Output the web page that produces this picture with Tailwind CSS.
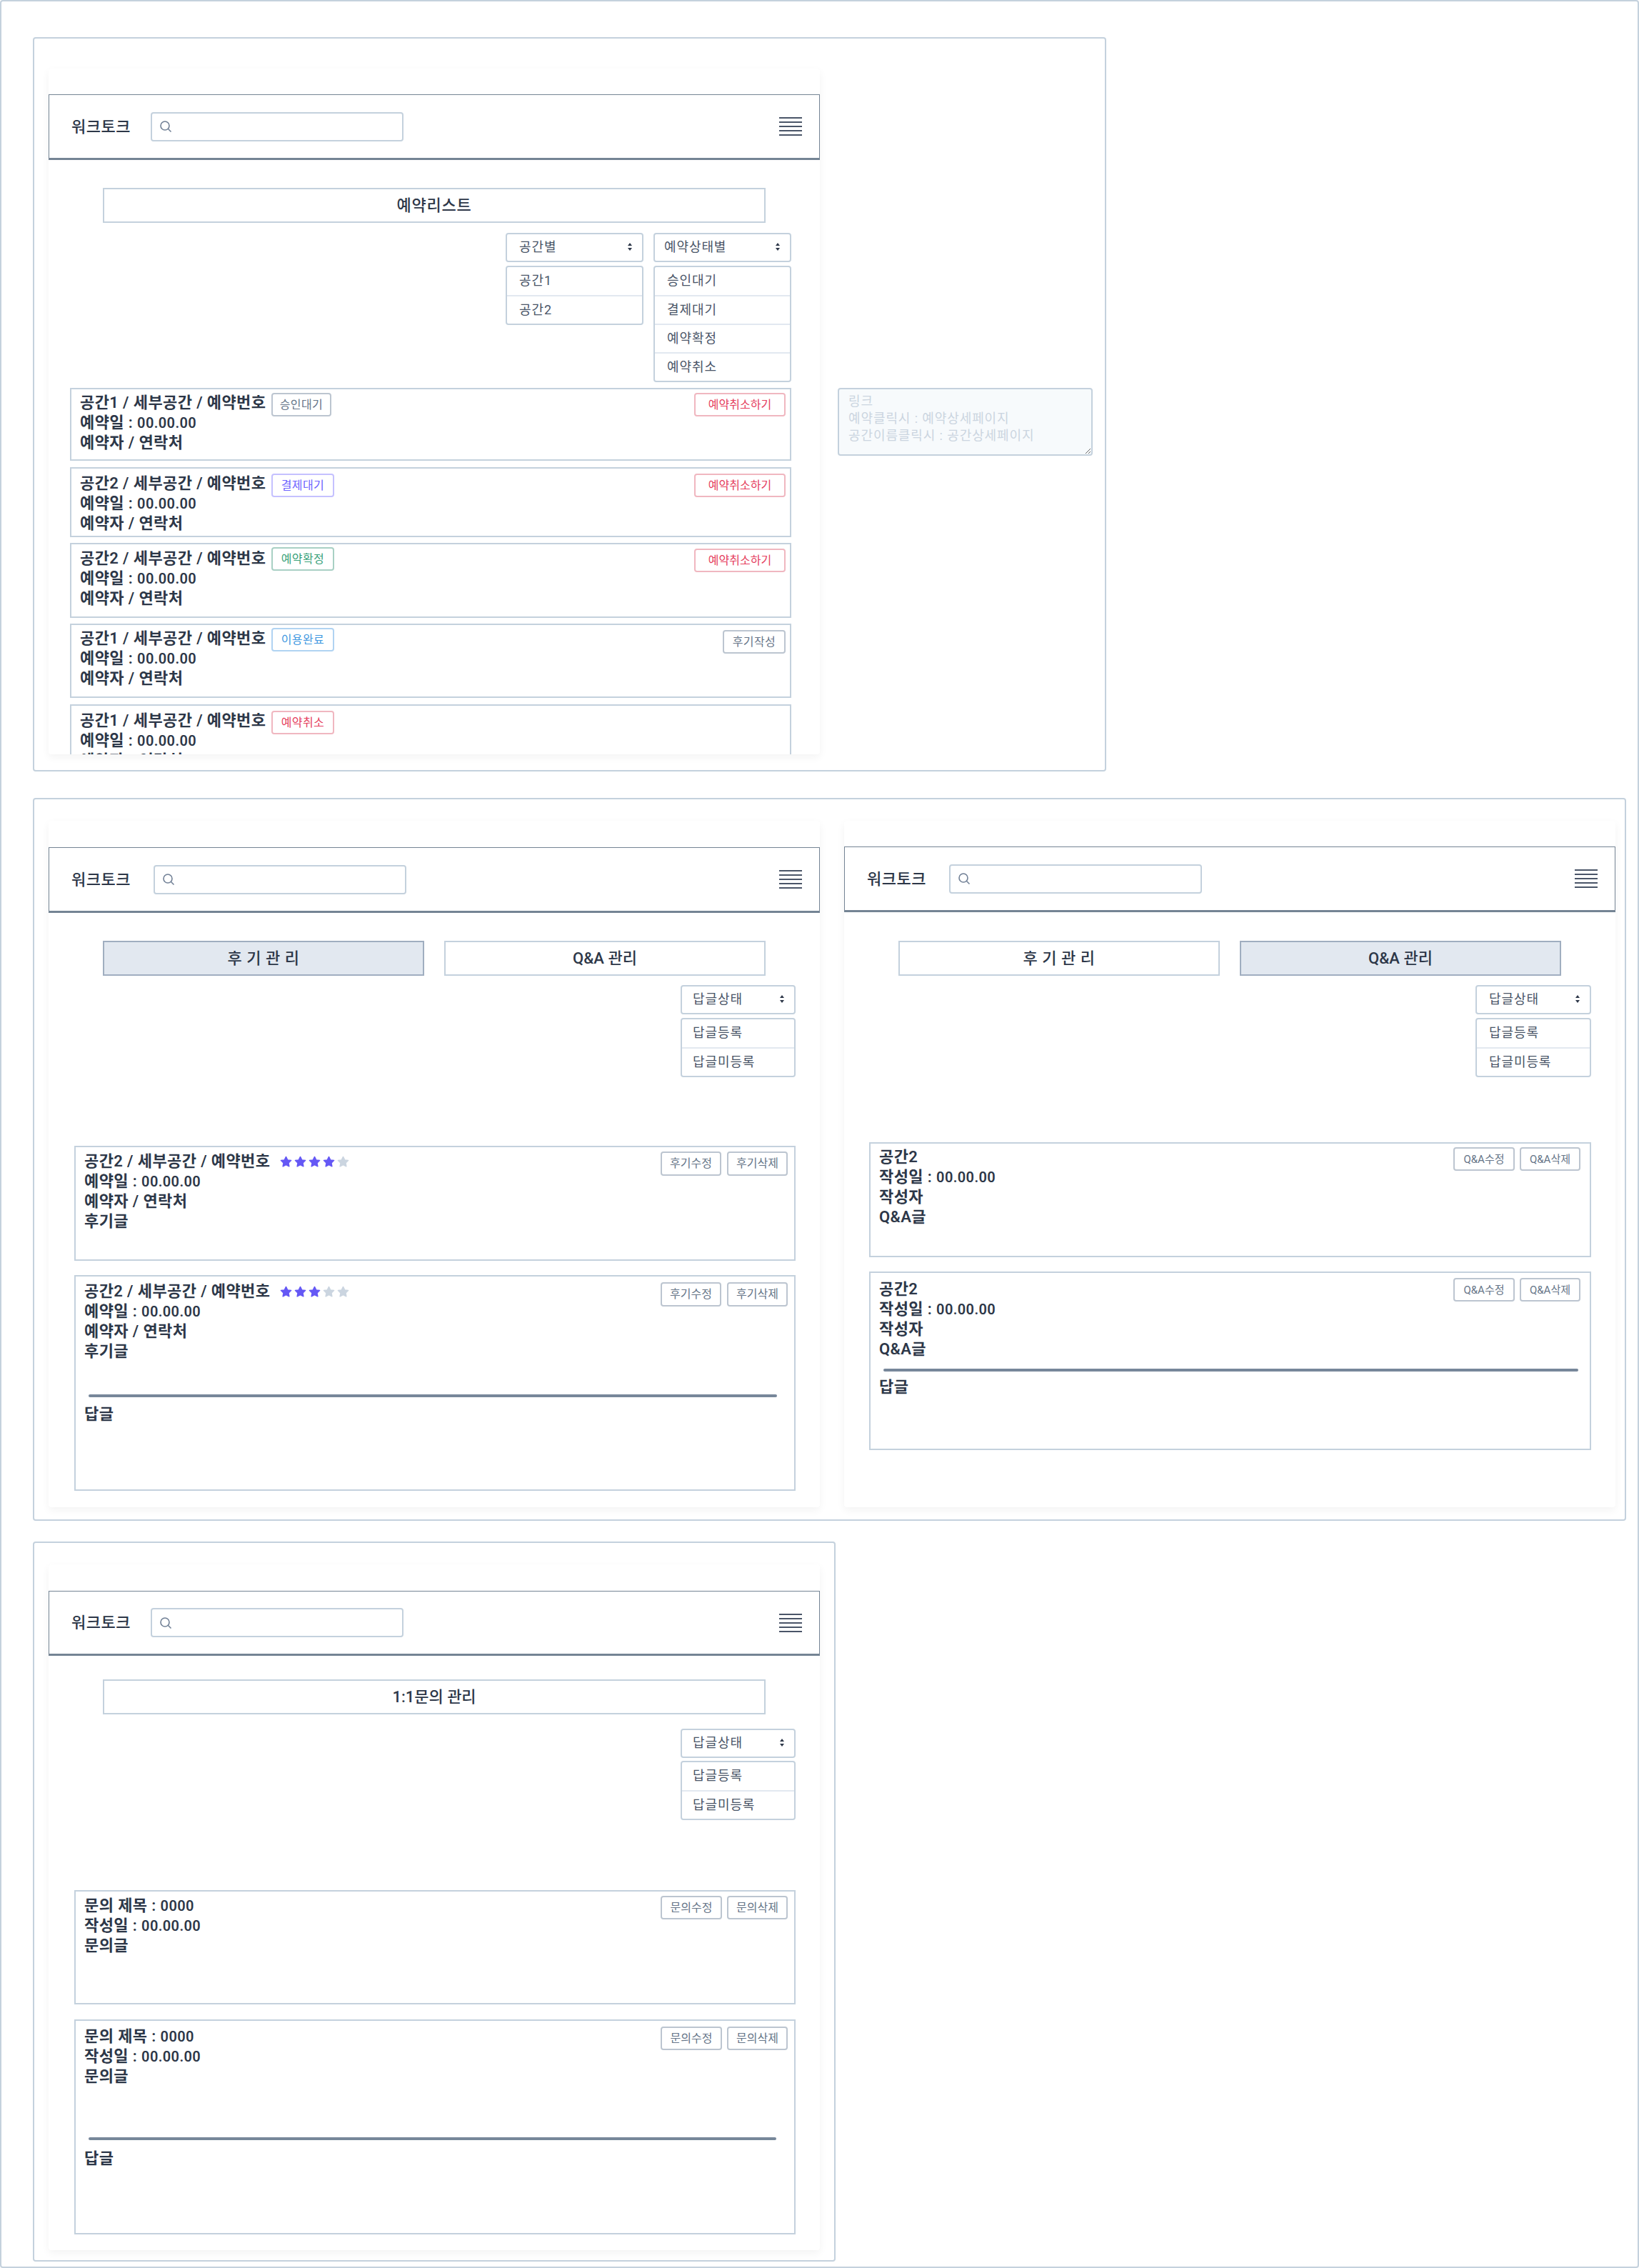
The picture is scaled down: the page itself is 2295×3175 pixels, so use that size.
<!DOCTYPE html>
<html lang="ko">
<head>
  <meta charset="UTF-8">
  <title>워크토크</title>
  <script src="https://cdn.jsdelivr.net/npm/@tailwindcss/browser@4"></script>
</head>
<body class="bg-white">
<div class="w-[2295px] h-[3175px] border-2 border-[#c4d1dd] rounded-sm pl-[44px] pt-[50px] overflow-hidden font-['Roboto','Noto_Sans_CJK_KR',sans-serif] text-[#2d3748]">

  <!-- 예약리스트 -->
  <section class="w-[1503px] h-[1028px] border-2 border-[#c4d1dd] rounded-sm pl-[20px] pt-[42px] flex">
    <div class="w-[1080px] h-[960px] bg-white rounded-sm shadow-[0_4px_12px_rgba(0,0,0,0.05)] overflow-hidden pt-[36px]">
      <header class="h-[92px] border border-b-[3px] border-[#748494] flex items-center pl-[31px] pr-[24px]">
        <span class="w-[111px] text-[22px] font-medium tracking-[0.5px]">워크토크</span>
        <div class="w-[354px] h-[41px] border-2 border-[#c4d1dd] rounded flex items-center pl-[10px]">
          <svg class="w-[18px] h-[18px]" viewBox="0 0 18 18" fill="none" stroke="#718096" stroke-width="1.6"><circle cx="8" cy="8" r="6"/><path d="M12.5 12.5L16.5 16.5"/></svg>
        </div>
        <div class="ml-auto w-[32px] flex flex-col gap-[4px]">
          <i class="block h-[2px] bg-[#4a5568]"></i><i class="block h-[2px] bg-[#4a5568]"></i><i class="block h-[2px] bg-[#4a5568]"></i><i class="block h-[2px] bg-[#4a5568]"></i><i class="block h-[2px] bg-[#4a5568]"></i>
        </div>
      </header>
      <h2 class="ml-[76px] mt-[39px] w-[928px] h-[49px] border-2 border-[#c4d1dd] flex items-center justify-center text-[22px] font-medium tracking-[0.8px]">예약리스트</h2>
      <div class="mt-[14px] pr-[40px] h-[217px] flex justify-end items-start gap-[14px] text-[18px] text-[#4a5568] tracking-[0.9px]">
        <div class="w-[193px]">
          <div class="h-[41px] border-2 border-[#c4d1dd] rounded flex items-center justify-between pl-[17px] pr-[14px] pb-[2px]">공간별
            <svg class="w-[6px] h-[11px]" viewBox="0 0 6 11" fill="#2d3748"><path d="M3 0L6 4H0zM3 11L0 7H6z"/></svg>
          </div>
          <ul class="mt-[5px] border-2 border-[#c4d1dd] rounded">
            <li class="h-[39px] pl-[17px] pb-[2px] flex items-center">공간1</li>
            <li class="h-[40px] pl-[17px] pb-[2px] flex items-center border-t-2 border-[#e2e8f0]">공간2</li>
          </ul>
        </div>
        <div class="w-[193px]">
          <div class="h-[41px] border-2 border-[#c4d1dd] rounded flex items-center justify-between pl-[13px] pr-[14px] pb-[2px]">예약상태별
            <svg class="w-[6px] h-[11px]" viewBox="0 0 6 11" fill="#2d3748"><path d="M3 0L6 4H0zM3 11L0 7H6z"/></svg>
          </div>
          <ul class="mt-[5px] border-2 border-[#c4d1dd] rounded">
            <li class="h-[39px] pl-[17px] pb-[2px] flex items-center">승인대기</li>
            <li class="h-[40px] pl-[17px] pb-[2px] flex items-center border-t-2 border-[#e2e8f0]">결제대기</li>
            <li class="h-[40px] pl-[17px] pb-[2px] flex items-center border-t-2 border-[#e2e8f0]">예약확정</li>
            <li class="h-[40px] pl-[17px] pb-[2px] flex items-center border-t-2 border-[#e2e8f0]">예약취소</li>
          </ul>
        </div>
      </div>
      <article class="ml-[30px] w-[1010px] h-[102px] border-2 border-[#c4d1dd] pl-[12px] pr-[6px] pt-[5px] flex justify-between items-start text-[22px] leading-[28px] font-semibold tracking-[0.4px]">
        <div>
          <p class="flex items-start h-[28px]"><span class="w-[268px]">공간1 / 세부공간 / 예약번호</span><span class="h-[33px] w-[84px] border-2 border-[#bcc5d0] rounded-sm flex items-center justify-center text-[16px] font-normal text-[#667588]">승인대기</span></p>
          <p>예약일 : <span class="text-[20px]">00.00.00</span></p>
          <p>예약자 / 연락처</p>
        </div>
        <button class="h-[33px] w-[128px] border-2 border-[#f0b7c0] rounded-sm text-[16px] font-normal tracking-normal text-[#e53e5e]">예약취소하기</button>
      </article>
      <article class="ml-[30px] mt-[9px] w-[1010px] h-[98px] border-2 border-[#c4d1dd] pl-[12px] pr-[6px] pt-[7px] flex justify-between items-start text-[22px] leading-[28px] font-semibold tracking-[0.4px]">
        <div>
          <p class="flex items-start h-[28px]"><span class="w-[268px]">공간2 / 세부공간 / 예약번호</span><span class="h-[33px] w-[88px] border-2 border-[#c5c1ff] rounded-sm flex items-center justify-center text-[16px] font-normal text-[#6c63ff]">결제대기</span></p>
          <p>예약일 : <span class="text-[20px]">00.00.00</span></p>
          <p>예약자 / 연락처</p>
        </div>
        <button class="h-[33px] w-[128px] border-2 border-[#f0b7c0] rounded-sm text-[16px] font-normal tracking-normal text-[#e53e5e]">예약취소하기</button>
      </article>
      <article class="ml-[30px] mt-[8px] w-[1010px] h-[105px] border-2 border-[#c4d1dd] pl-[12px] pr-[6px] pt-[6px] flex justify-between items-start text-[22px] leading-[28px] font-semibold tracking-[0.4px]">
        <div>
          <p class="flex items-start h-[28px]"><span class="w-[268px]">공간2 / 세부공간 / 예약번호</span><span class="-mt-[2px] h-[33px] w-[88px] border-2 border-[#a8d0c4] rounded-sm flex items-center justify-center text-[16px] font-normal text-[#38a17a]">예약확정</span></p>
          <p>예약일 : <span class="text-[20px]">00.00.00</span></p>
          <p>예약자 / 연락처</p>
        </div>
        <button class="h-[33px] w-[128px] border-2 border-[#f0b7c0] rounded-sm text-[16px] font-normal tracking-normal text-[#e53e5e]">예약취소하기</button>
      </article>
      <article class="ml-[30px] mt-[8px] w-[1010px] h-[104px] border-2 border-[#c4d1dd] pl-[12px] pr-[6px] pt-[5px] flex justify-between items-start text-[22px] leading-[28px] font-semibold tracking-[0.4px]">
        <div>
          <p class="flex items-start h-[28px]"><span class="w-[268px]">공간1 / 세부공간 / 예약번호</span><span class="-mt-[1px] h-[33px] w-[88px] border-2 border-[#b0d3f2] rounded-sm flex items-center justify-center text-[16px] font-normal text-[#4299e1]">이용완료</span></p>
          <p>예약일 : <span class="text-[20px]">00.00.00</span></p>
          <p>예약자 / 연락처</p>
        </div>
        <button class="mt-[2px] h-[33px] w-[88px] border-2 border-[#bcc5d0] rounded-sm text-[16px] font-normal text-[#667588]">후기작성</button>
      </article>
      <article class="ml-[30px] mt-[9px] w-[1010px] h-[104px] border-2 border-[#c4d1dd] pl-[12px] pr-[6px] pt-[7px] text-[22px] leading-[28px] font-semibold tracking-[0.4px]">
        <p class="flex items-start h-[28px]"><span class="w-[268px]">공간1 / 세부공간 / 예약번호</span><span class="h-[33px] w-[88px] border-2 border-[#f0b7c0] rounded-sm flex items-center justify-center text-[16px] font-normal text-[#e53e5e]">예약취소</span></p>
        <p>예약일 : <span class="text-[20px]">00.00.00</span></p>
        <p>예약자 / 연락처</p>
      </article>
    </div>
    <textarea class="ml-[25px] mt-[447px] w-[357px] h-[95px] border-2 border-[#c4d1dd] rounded bg-[#f7fafc] px-[13px] py-[5px] text-[18px] leading-[24px] tracking-[0.9px] placeholder:text-[#cbd5e0]" placeholder="링크&#10;예약클릭시 : 예약상세페이지&#10;공간이름클릭시 : 공간상세페이지"></textarea>
  </section>

  <!-- 후기 / Q&A 관리 -->
  <section class="mt-[37px] w-[2231px] h-[1012px] border-2 border-[#c4d1dd] rounded-sm pl-[20px] pt-[30px] flex gap-[34px]">
    <div class="w-[1080px] h-[961px] bg-white rounded-sm shadow-[0_4px_12px_rgba(0,0,0,0.05)] pt-[37px]">
      <header class="h-[92px] border border-b-[3px] border-[#748494] flex items-center pl-[31px] pr-[24px]">
        <span class="w-[115px] text-[22px] font-medium tracking-[0.5px]">워크토크</span>
        <div class="w-[354px] h-[41px] border-2 border-[#c4d1dd] rounded flex items-center pl-[10px]">
          <svg class="w-[18px] h-[18px]" viewBox="0 0 18 18" fill="none" stroke="#718096" stroke-width="1.6"><circle cx="8" cy="8" r="6"/><path d="M12.5 12.5L16.5 16.5"/></svg>
        </div>
        <div class="ml-auto w-[32px] flex flex-col gap-[4px]">
          <i class="block h-[2px] bg-[#4a5568]"></i><i class="block h-[2px] bg-[#4a5568]"></i><i class="block h-[2px] bg-[#4a5568]"></i><i class="block h-[2px] bg-[#4a5568]"></i><i class="block h-[2px] bg-[#4a5568]"></i>
        </div>
      </header>
      <div class="ml-[76px] mt-[39px] flex gap-[28px]">
        <div class="w-[450px] h-[49px] border-2 border-[#a0aec0] bg-[#e2e8f0] flex items-center justify-center text-[22px] font-medium tracking-[0.5px]">후 기 관 리</div>
        <div class="w-[450px] h-[49px] border-2 border-[#c4d1dd] flex items-center justify-center text-[22px] font-medium">Q&amp;A 관리</div>
      </div>
      <div class="mt-[13px] ml-[885px] w-[161px] h-[225px] text-[18px] text-[#4a5568] tracking-[0.9px]">
        <div class="h-[41px] border-2 border-[#c4d1dd] rounded flex items-center justify-between pl-[15px] pr-[14px] pb-[2px]">답글상태
          <svg class="w-[6px] h-[11px]" viewBox="0 0 6 11" fill="#2d3748"><path d="M3 0L6 4H0zM3 11L0 7H6z"/></svg>
        </div>
        <ul class="mt-[5px] border-2 border-[#c4d1dd] rounded">
          <li class="h-[39px] pl-[15px] pb-[2px] flex items-center">답글등록</li>
          <li class="h-[40px] pl-[15px] pb-[2px] flex items-center border-t-2 border-[#e2e8f0]">답글미등록</li>
        </ul>
      </div>
      <article class="ml-[36px] w-[1010px] h-[161px] border-2 border-[#c4d1dd] pl-[12px] pr-[9px] pt-[6px] flex justify-between items-start text-[22px] leading-[28px] font-semibold tracking-[0.4px]">
        <div>
          <p class="flex items-center h-[28px]"><span class="w-[274px]">공간2 / 세부공간 / 예약번호</span>
            <span class="flex gap-[3px]">
              <svg class="w-[17px] h-[17px]" viewBox="0 0 24 24" fill="#6558f5" stroke="#6558f5" stroke-width="2" stroke-linejoin="round"><path d="M12 2l3.09 6.26L22 9.27l-5 4.87 1.18 6.88L12 17.77l-6.18 3.25L7 14.14 2 9.27l6.91-1.01z"/></svg>
              <svg class="w-[17px] h-[17px]" viewBox="0 0 24 24" fill="#6558f5" stroke="#6558f5" stroke-width="2" stroke-linejoin="round"><path d="M12 2l3.09 6.26L22 9.27l-5 4.87 1.18 6.88L12 17.77l-6.18 3.25L7 14.14 2 9.27l6.91-1.01z"/></svg>
              <svg class="w-[17px] h-[17px]" viewBox="0 0 24 24" fill="#6558f5" stroke="#6558f5" stroke-width="2" stroke-linejoin="round"><path d="M12 2l3.09 6.26L22 9.27l-5 4.87 1.18 6.88L12 17.77l-6.18 3.25L7 14.14 2 9.27l6.91-1.01z"/></svg>
              <svg class="w-[17px] h-[17px]" viewBox="0 0 24 24" fill="#6558f5" stroke="#6558f5" stroke-width="2" stroke-linejoin="round"><path d="M12 2l3.09 6.26L22 9.27l-5 4.87 1.18 6.88L12 17.77l-6.18 3.25L7 14.14 2 9.27l6.91-1.01z"/></svg>
              <svg class="w-[17px] h-[17px]" viewBox="0 0 24 24" fill="#cbd5e0" stroke="#cbd5e0" stroke-width="2" stroke-linejoin="round"><path d="M12 2l3.09 6.26L22 9.27l-5 4.87 1.18 6.88L12 17.77l-6.18 3.25L7 14.14 2 9.27l6.91-1.01z"/></svg>
            </span>
          </p>
          <p>예약일 : <span class="text-[20px]">00.00.00</span></p>
          <p>예약자 / 연락처</p>
          <p>후기글</p>
        </div>
        <div class="flex gap-[8px] text-[16px] font-normal tracking-normal text-[#667588]">
          <button class="w-[85px] h-[34px] border-2 border-[#bcc5d0] rounded-sm">후기수정</button>
          <button class="w-[85px] h-[34px] border-2 border-[#bcc5d0] rounded-sm">후기삭제</button>
        </div>
      </article>
      <article class="ml-[36px] mt-[20px] w-[1010px] h-[302px] border-2 border-[#c4d1dd] pl-[12px] pr-[9px] pt-[7px] text-[22px] leading-[28px] font-semibold tracking-[0.4px]">
        <div class="flex justify-between items-start">
          <div>
            <p class="flex items-center h-[28px]"><span class="w-[274px]">공간2 / 세부공간 / 예약번호</span>
              <span class="flex gap-[3px]">
                <svg class="w-[17px] h-[17px]" viewBox="0 0 24 24" fill="#6558f5" stroke="#6558f5" stroke-width="2" stroke-linejoin="round"><path d="M12 2l3.09 6.26L22 9.27l-5 4.87 1.18 6.88L12 17.77l-6.18 3.25L7 14.14 2 9.27l6.91-1.01z"/></svg>
                <svg class="w-[17px] h-[17px]" viewBox="0 0 24 24" fill="#6558f5" stroke="#6558f5" stroke-width="2" stroke-linejoin="round"><path d="M12 2l3.09 6.26L22 9.27l-5 4.87 1.18 6.88L12 17.77l-6.18 3.25L7 14.14 2 9.27l6.91-1.01z"/></svg>
                <svg class="w-[17px] h-[17px]" viewBox="0 0 24 24" fill="#6558f5" stroke="#6558f5" stroke-width="2" stroke-linejoin="round"><path d="M12 2l3.09 6.26L22 9.27l-5 4.87 1.18 6.88L12 17.77l-6.18 3.25L7 14.14 2 9.27l6.91-1.01z"/></svg>
                <svg class="w-[17px] h-[17px]" viewBox="0 0 24 24" fill="#cbd5e0" stroke="#cbd5e0" stroke-width="2" stroke-linejoin="round"><path d="M12 2l3.09 6.26L22 9.27l-5 4.87 1.18 6.88L12 17.77l-6.18 3.25L7 14.14 2 9.27l6.91-1.01z"/></svg>
                <svg class="w-[17px] h-[17px]" viewBox="0 0 24 24" fill="#cbd5e0" stroke="#cbd5e0" stroke-width="2" stroke-linejoin="round"><path d="M12 2l3.09 6.26L22 9.27l-5 4.87 1.18 6.88L12 17.77l-6.18 3.25L7 14.14 2 9.27l6.91-1.01z"/></svg>
              </span>
            </p>
            <p>예약일 : <span class="text-[20px]">00.00.00</span></p>
            <p>예약자 / 연락처</p>
            <p>후기글</p>
          </div>
          <div class="flex gap-[8px] mt-[1px] text-[16px] font-normal tracking-normal text-[#667588]">
            <button class="w-[85px] h-[34px] border-2 border-[#bcc5d0] rounded-sm">후기수정</button>
            <button class="w-[85px] h-[34px] border-2 border-[#bcc5d0] rounded-sm">후기삭제</button>
          </div>
        </div>
        <hr class="mt-[46px] ml-[6px] w-[964px] h-[4px] border-0 rounded-sm bg-[#77879a]">
        <p class="mt-[10px]">답글</p>
      </article>
    </div>

    <div class="w-[1080px] h-[961px] bg-white rounded-sm shadow-[0_4px_12px_rgba(0,0,0,0.05)] pt-[36px]">
      <header class="h-[92px] border border-b-[3px] border-[#748494] flex items-center pl-[31px] pr-[24px]">
        <span class="w-[115px] text-[22px] font-medium tracking-[0.5px]">워크토크</span>
        <div class="w-[354px] h-[41px] border-2 border-[#c4d1dd] rounded flex items-center pl-[10px]">
          <svg class="w-[18px] h-[18px]" viewBox="0 0 18 18" fill="none" stroke="#718096" stroke-width="1.6"><circle cx="8" cy="8" r="6"/><path d="M12.5 12.5L16.5 16.5"/></svg>
        </div>
        <div class="ml-auto w-[32px] flex flex-col gap-[4px]">
          <i class="block h-[2px] bg-[#4a5568]"></i><i class="block h-[2px] bg-[#4a5568]"></i><i class="block h-[2px] bg-[#4a5568]"></i><i class="block h-[2px] bg-[#4a5568]"></i><i class="block h-[2px] bg-[#4a5568]"></i>
        </div>
      </header>
      <div class="ml-[76px] mt-[40px] flex gap-[28px]">
        <div class="w-[450px] h-[49px] border-2 border-[#c4d1dd] flex items-center justify-center text-[22px] font-medium tracking-[0.5px]">후 기 관 리</div>
        <div class="w-[450px] h-[49px] border-2 border-[#a0aec0] bg-[#e2e8f0] flex items-center justify-center text-[22px] font-medium">Q&amp;A 관리</div>
      </div>
      <div class="mt-[13px] ml-[884px] w-[162px] h-[220px] text-[18px] text-[#4a5568] tracking-[0.9px]">
        <div class="h-[41px] border-2 border-[#c4d1dd] rounded flex items-center justify-between pl-[17px] pr-[14px] pb-[2px]">답글상태
          <svg class="w-[6px] h-[11px]" viewBox="0 0 6 11" fill="#2d3748"><path d="M3 0L6 4H0zM3 11L0 7H6z"/></svg>
        </div>
        <ul class="mt-[5px] border-2 border-[#c4d1dd] rounded">
          <li class="h-[39px] pl-[17px] pb-[2px] flex items-center">답글등록</li>
          <li class="h-[40px] pl-[17px] pb-[2px] flex items-center border-t-2 border-[#e2e8f0]">답글미등록</li>
        </ul>
      </div>
      <article class="ml-[35px] w-[1011px] h-[161px] border-2 border-[#c4d1dd] pl-[12px] pr-[13px] pt-[5px] flex justify-between items-start text-[22px] leading-[28px] font-semibold tracking-[0.4px]">
        <div>
          <p>공간2</p>
          <p>작성일 : <span class="text-[20px]">00.00.00</span></p>
          <p>작성자</p>
          <p>Q&amp;A글</p>
        </div>
        <div class="flex gap-[7px] text-[15px] font-normal tracking-normal text-[#667588]">
          <button class="w-[86px] h-[33px] border-2 border-[#bcc5d0] rounded-sm">Q&amp;A수정</button>
          <button class="w-[85px] h-[33px] border-2 border-[#bcc5d0] rounded-sm">Q&amp;A삭제</button>
        </div>
      </article>
      <article class="ml-[35px] mt-[20px] w-[1011px] h-[250px] border-2 border-[#c4d1dd] pl-[12px] pr-[13px] pt-[9px] text-[22px] leading-[28px] font-semibold tracking-[0.4px]">
        <div class="flex justify-between items-start">
          <div>
            <p>공간2</p>
            <p>작성일 : <span class="text-[20px]">00.00.00</span></p>
            <p>작성자</p>
            <p>Q&amp;A글</p>
          </div>
          <div class="flex gap-[7px] -mt-[2px] text-[15px] font-normal tracking-normal text-[#667588]">
            <button class="w-[86px] h-[33px] border-2 border-[#bcc5d0] rounded-sm">Q&amp;A수정</button>
            <button class="w-[85px] h-[33px] border-2 border-[#bcc5d0] rounded-sm">Q&amp;A삭제</button>
          </div>
        </div>
        <hr class="mt-[13px] ml-[6px] w-[973px] h-[4px] border-0 rounded-sm bg-[#77879a]">
        <p class="mt-[8px]">답글</p>
      </article>
    </div>
  </section>

  <!-- 1:1문의 관리 -->
  <section class="mt-[29px] w-[1124px] h-[1008px] border-2 border-[#c4d1dd] rounded-sm pl-[20px] pt-[30px]">
    <div class="w-[1080px] h-[960px] bg-white rounded-sm shadow-[0_4px_12px_rgba(0,0,0,0.05)] pt-[37px]">
      <header class="h-[91px] border border-b-[3px] border-[#748494] flex items-center pl-[31px] pr-[24px]">
        <span class="w-[111px] text-[22px] font-medium tracking-[0.5px]">워크토크</span>
        <div class="w-[354px] h-[41px] border-2 border-[#c4d1dd] rounded flex items-center pl-[10px]">
          <svg class="w-[18px] h-[18px]" viewBox="0 0 18 18" fill="none" stroke="#718096" stroke-width="1.6"><circle cx="8" cy="8" r="6"/><path d="M12.5 12.5L16.5 16.5"/></svg>
        </div>
        <div class="ml-auto w-[32px] flex flex-col gap-[4px]">
          <i class="block h-[2px] bg-[#4a5568]"></i><i class="block h-[2px] bg-[#4a5568]"></i><i class="block h-[2px] bg-[#4a5568]"></i><i class="block h-[2px] bg-[#4a5568]"></i><i class="block h-[2px] bg-[#4a5568]"></i>
        </div>
      </header>
      <h2 class="ml-[76px] mt-[33px] w-[928px] h-[49px] border-2 border-[#c4d1dd] flex items-center justify-center text-[22px] font-medium">1:1문의 관리</h2>
      <div class="mt-[20px] ml-[885px] w-[161px] h-[226px] text-[18px] text-[#4a5568] tracking-[0.9px]">
        <div class="h-[41px] border-2 border-[#c4d1dd] rounded flex items-center justify-between pl-[15px] pr-[14px] pb-[2px]">답글상태
          <svg class="w-[6px] h-[11px]" viewBox="0 0 6 11" fill="#2d3748"><path d="M3 0L6 4H0zM3 11L0 7H6z"/></svg>
        </div>
        <ul class="mt-[4px] border-2 border-[#c4d1dd] rounded">
          <li class="h-[39px] pl-[15px] pb-[2px] flex items-center">답글등록</li>
          <li class="h-[40px] pl-[15px] pb-[2px] flex items-center border-t-2 border-[#e2e8f0]">답글미등록</li>
        </ul>
      </div>
      <article class="ml-[36px] w-[1010px] h-[160px] border-2 border-[#c4d1dd] pl-[12px] pr-[9px] pt-[6px] flex justify-between items-start text-[22px] leading-[28px] font-semibold tracking-[0.4px]">
        <div>
          <p>문의 제목 : <span class="text-[20px]">0000</span></p>
          <p>작성일 : <span class="text-[20px]">00.00.00</span></p>
          <p>문의글</p>
        </div>
        <div class="flex gap-[7px] text-[16px] font-normal tracking-normal text-[#667588]">
          <button class="w-[86px] h-[33px] border-2 border-[#bcc5d0] rounded-sm">문의수정</button>
          <button class="w-[85px] h-[33px] border-2 border-[#bcc5d0] rounded-sm">문의삭제</button>
        </div>
      </article>
      <article class="ml-[36px] mt-[21px] w-[1010px] h-[301px] border-2 border-[#c4d1dd] pl-[12px] pr-[9px] pt-[8px] text-[22px] leading-[28px] font-semibold tracking-[0.4px]">
        <div class="flex justify-between items-start">
          <div>
            <p>문의 제목 : <span class="text-[20px]">0000</span></p>
            <p>작성일 : <span class="text-[20px]">00.00.00</span></p>
            <p>문의글</p>
          </div>
          <div class="flex gap-[7px] text-[16px] font-normal tracking-normal text-[#667588]">
            <button class="w-[86px] h-[33px] border-2 border-[#bcc5d0] rounded-sm">문의수정</button>
            <button class="w-[85px] h-[33px] border-2 border-[#bcc5d0] rounded-sm">문의삭제</button>
          </div>
        </div>
        <hr class="mt-[71px] ml-[6px] w-[963px] h-[4px] border-0 rounded-sm bg-[#77879a]">
        <p class="mt-[12px]">답글</p>
      </article>
    </div>
  </section>
</div>
</body>
</html>
